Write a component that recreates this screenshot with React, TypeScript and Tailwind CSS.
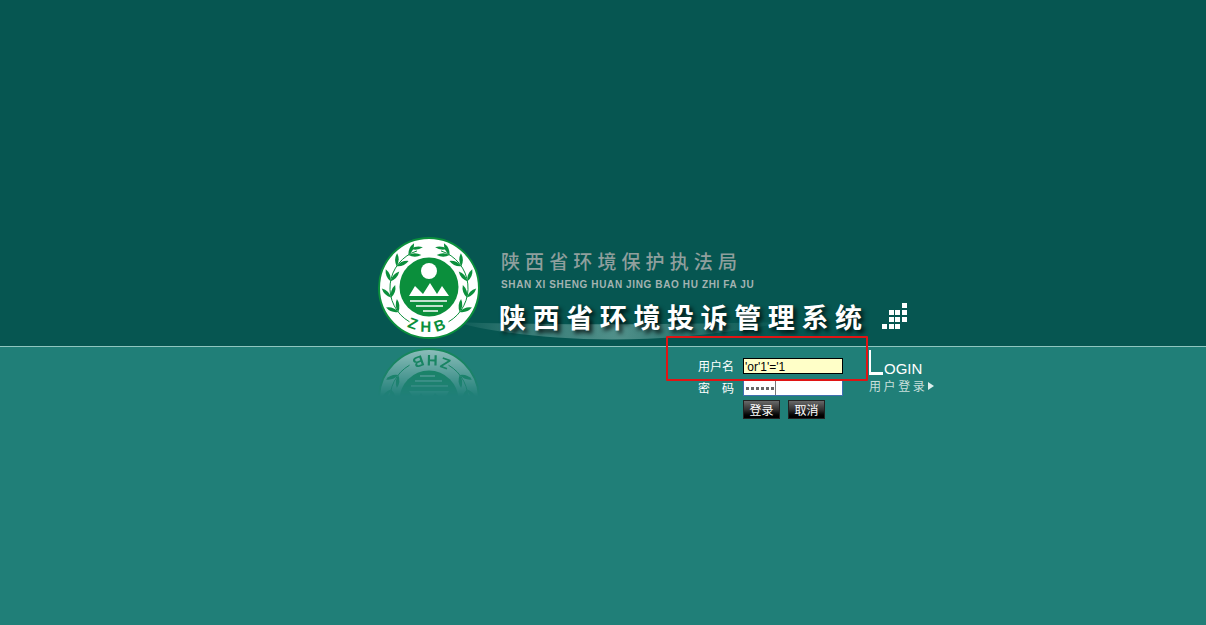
const cjk = "font-['Noto_Sans_CJK_SC','Liberation_Sans',sans-serif]"

const leafAngles = [32, 56, 80, 104, 128]

function Branch({ flip }: { flip?: boolean }) {
  return (
    <g transform={flip ? 'translate(102 0) scale(-1 1)' : undefined} fill="#0b8f3c">
      <path d="M31.5 84.8 A39 39 0 0 1 39 13.9" fill="none" stroke="#0b8f3c" strokeWidth="1" />
      {leafAngles.map((a) => (
        <g key={a} transform={`rotate(${-a} 51 51) translate(51 12)`}>
          <path d="M0 0 Q6.5 -3.6 13 0 Q6.5 3.6 0 0" transform="rotate(-32)" />
          <path d="M0 0 Q6.5 -3.6 13 0 Q6.5 3.6 0 0" transform="rotate(32)" />
        </g>
      ))}
      <path d="M0 0 Q6 -3 12 0 Q6 3 0 0" transform="translate(33 12) rotate(-8)" />
    </g>
  )
}

function Logo({ id }: { id: string }) {
  return (
    <svg width="102" height="102" viewBox="0 0 102 102">
      <circle cx="51" cy="51" r="50" fill="#fff" stroke="#0b8f3c" strokeWidth="2" />
      <Branch />
      <Branch flip />
      <circle cx="51" cy="50" r="29.5" fill="#0b8f3c" />
      <circle cx="51" cy="34" r="8" fill="#fff" />
      <path d="M31 59 L37 49 L45 57 L52 46 L59 57 L64 49 L71 59 Z" fill="#fff" />
      <path d="M32 64 H69 M38 69 H65 M45 74 H60" stroke="#fff" strokeWidth="1.4" />
      <path id={id} d="M7 51 A44 44 0 0 0 95 51" fill="none" />
      <text fontFamily="Liberation Sans" fontWeight="700" fontSize="15" fill="#0b8f3c" letterSpacing="5" textAnchor="middle">
        <textPath href={`#${id}`} startOffset="50%">ZHB</textPath>
      </text>
    </svg>
  )
}

function Dots() {
  const cells = [
    [20, 0],
    [7, 7], [13, 7], [20, 7],
    [7, 14], [13, 14], [20, 14],
    [0, 21], [7, 21], [13, 21],
  ]
  return (
    <svg width="25" height="26" viewBox="0 0 25 26" className="mb-[4px] ml-[13px]">
      {cells.map(([x, y]) => (
        <rect key={`${x}-${y}`} x={x} y={y} width="5" height="5" fill="#fff" />
      ))}
    </svg>
  )
}

export default function App() {
  return (
    <div className="relative flex h-[625px] w-full flex-col overflow-hidden bg-[#207f78]">
      <header className="relative flex h-[346px] items-end bg-[#065651] pl-[378px]">
        {/* swoosh behind the title */}
        <svg width="340" height="30" viewBox="0 0 340 30" className="absolute bottom-0 left-[450px]">
          <defs>
            <linearGradient id="swoosh" x1="0" x2="1" y1="0" y2="0">
              <stop offset="0" stopColor="#7fb5ae" stopOpacity="0.05" />
              <stop offset="0.2" stopColor="#8fc0ba" stopOpacity="0.35" />
              <stop offset="0.5" stopColor="#9ccbc4" stopOpacity="0.5" />
              <stop offset="0.8" stopColor="#5b9c95" stopOpacity="0.3" />
              <stop offset="1" stopColor="#5b9c95" stopOpacity="0" />
            </linearGradient>
          </defs>
          <path d="M5 6 C70 24 200 34 335 6 C240 8 100 10 5 6 Z" fill="url(#swoosh)" />
        </svg>
        <div className="relative mb-[7px]">
          <Logo id="zhb-arc" />
        </div>
        <div className="relative mb-[13px] ml-[21px] flex flex-col">
          <div className={`${cjk} text-[19px] leading-[24px] font-medium tracking-[5.1px] text-[#8f9f9d]`}>陕西省环境保护执法局</div>
          <div className="mt-[6px] font-['Liberation_Sans',sans-serif] text-[10px] leading-[12px] font-bold tracking-[0.62px] whitespace-nowrap text-[#a3b3b1]">
            SHAN XI SHENG HUAN JING BAO HU ZHI FA JU
          </div>
          <div className="mt-[10px] -ml-[2px] flex items-end">
            <div className={`${cjk} text-[27px] leading-[32px] font-bold tracking-[6.6px] whitespace-nowrap text-white [text-shadow:3px_3px_4px_rgba(0,0,0,0.85)]`}>
              陕西省环境投诉管理系统
            </div>
            <Dots />
          </div>
        </div>
      </header>

      <div className="h-px bg-[#8fc6bf]" />

      <main className="relative flex flex-1 pt-[11px] pl-[698px]">
        <div className="absolute top-px left-[378px] h-[48px] overflow-hidden opacity-50 [mask-image:linear-gradient(to_bottom,#000,transparent)]">
          <div className="rotate-180">
            <Logo id="zhb-arc-reflect" />
          </div>
        </div>

        <form className={`${cjk} flex flex-col text-[12px] text-white`}>
          <div className="flex h-[16px] items-center">
            <label className="mr-[9px] w-[36px] leading-none">用户名</label>
            <input
              readOnly
              value="'or'1'='1"
              className="h-[16px] w-[100px] border border-black bg-[#ffffc8] px-px pt-px font-['Liberation_Sans',sans-serif] text-[12px] text-black outline-none"
            />
          </div>
          <div className="mt-[6px] flex h-[16px] items-center">
            <label className="mr-[9px] flex w-[36px] justify-between leading-none">
              <span>密</span>
              <span>码</span>
            </label>
            <div className="flex h-[16px] w-[100px] items-center border border-[#3f6fb0] bg-white pl-px">
              <div className="flex h-full items-center gap-[2px] border-r border-[#777] pr-px pl-px">
                {[0, 1, 2, 3, 4, 5].map((n) => (
                  <span key={n} className="h-[3px] w-[3px] bg-[#666]" />
                ))}
              </div>
            </div>
          </div>
          <div className="mt-[4px] ml-[45px] flex gap-[8px]">
            <button type="button" className="h-[19px] w-[37px] border border-[#222] bg-gradient-to-b from-[#6a6a6a] via-[#333] to-black text-[12px] leading-none text-white">登录</button>
            <button type="button" className="h-[19px] w-[37px] border border-[#222] bg-gradient-to-b from-[#6a6a6a] via-[#333] to-black text-[12px] leading-none text-white">取消</button>
          </div>
        </form>

        <div className="ml-[26px] flex flex-col">
          <div className="-mt-[8px] flex h-[26px] items-end">
            <div className="mb-px h-[25px] w-[14px] border-b-[3px] border-l-[2px] border-white" />
            <span className="ml-px font-['Liberation_Sans',sans-serif] text-[15px] leading-[15px] text-white">OGIN</span>
          </div>
          <div className={`${cjk} mt-[2px] flex items-center text-[12px] leading-[16px] tracking-[2.6px] text-[#c9dfdc]`}>
            用户登录
            <span className="ml-px h-0 w-0 border-y-[4px] border-l-[6px] border-y-transparent border-l-[#dfeeec]" />
          </div>
        </div>
      </main>

      {/* annotation box drawn over the page */}
      <div className="absolute top-[336px] left-[666px] h-[45px] w-[202px] rounded-[1px] border-2 border-[#e01414]" />
    </div>
  )
}
